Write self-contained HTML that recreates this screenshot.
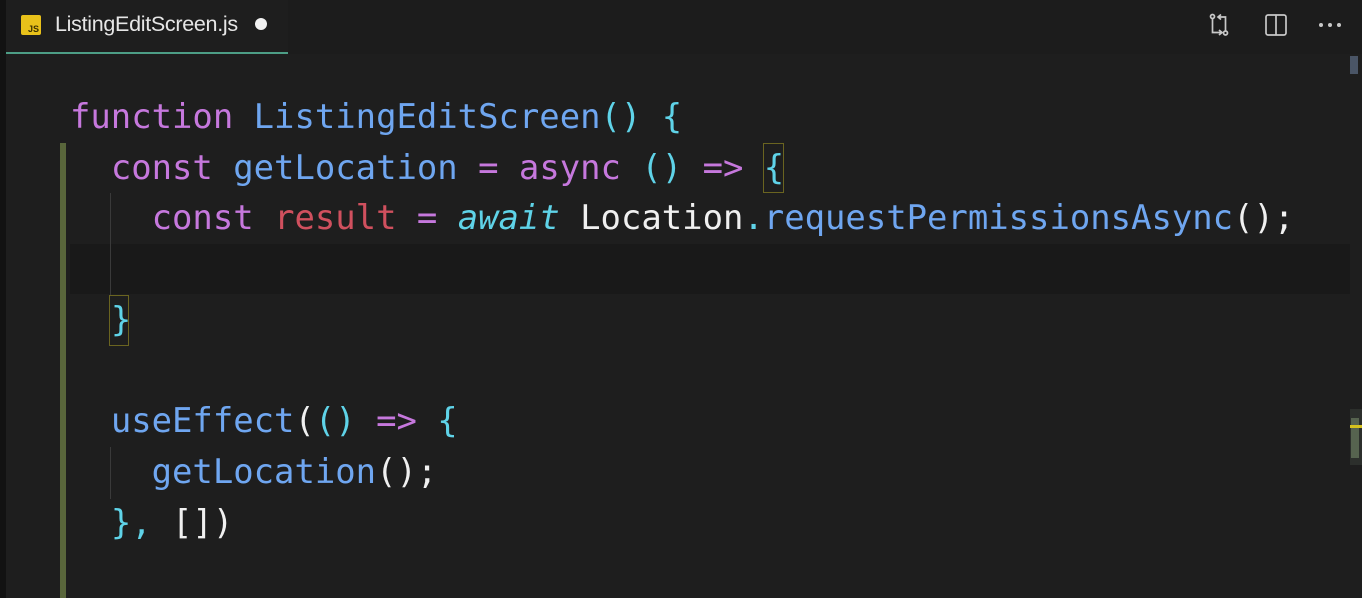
<!DOCTYPE html>
<html><head><meta charset="utf-8"><style>
html,body{margin:0;padding:0;}
body{width:1362px;height:598px;background:#1e1e1e;position:relative;overflow:hidden;font-family:"DejaVu Sans Mono","Liberation Mono",monospace;}
.side{position:absolute;left:0;top:0;width:6px;height:598px;background:#121212;}
.tabbar{position:absolute;left:6px;top:0;right:0;height:54px;background:#1c1c1c;}
.tab{position:absolute;left:6px;top:0;width:282px;height:52px;border-bottom:2px solid #4d9e86;background:#1e1e1e;}
.js{position:absolute;left:21px;top:15px;width:20px;height:20px;background:#e8c11a;border-radius:2px;font:bold 9px "Liberation Sans",sans-serif;color:#3a3000;}
.js span{position:absolute;right:2px;bottom:1px;}
.tname{position:absolute;left:55px;top:12px;font:21.5px "Liberation Sans",sans-serif;color:#e6e6e6;letter-spacing:-0.3px;}
.dot{position:absolute;left:255px;top:18px;width:12px;height:12px;border-radius:50%;background:#f2f2f2;}
.code{position:absolute;left:70px;top:92px;font-size:33.9px;line-height:50.7px;white-space:pre;color:#e8e8e8;}
.k{color:#c678dd}.f{color:#6fa6f0}.c{color:#5fd3e8}.r{color:#d0505e}.w{color:#f0f0f0}
.cur{position:absolute;left:70px;top:244px;width:1280px;height:50px;background:#191919;}
.gbar{position:absolute;left:60px;top:143px;width:6px;height:455px;background:#59663b;}
.guide{position:absolute;width:1px;background:#3a3a3a;}
.box{position:absolute;border:1px solid #6a6420;}
</style></head><body>
<div class="side"></div>
<div class="tabbar"></div>
<div class="tab"></div>
<div class="js"><span>JS</span></div>
<div class="tname">ListingEditScreen.js</div>
<div class="dot"></div>
<svg style="position:absolute;left:1207px;top:12px" width="26" height="26" viewBox="0 0 26 26" fill="none" stroke="#c8c8c8" stroke-width="1.7"><circle cx="5.5" cy="4.5" r="2"/><circle cx="18.5" cy="21" r="2"/><path d="M5.5 6.5v14h9M12 18l3 2.5-3 2.5"/><path d="M18.5 19V5H11M14 2.5 11 5l3 2.5"/></svg>
<svg style="position:absolute;left:1264px;top:13px" width="24" height="24" viewBox="0 0 24 24" fill="none" stroke="#c8c8c8" stroke-width="1.7"><rect x="2" y="2" width="20" height="20" rx="2"/><path d="M12 2v20"/></svg>
<div style="position:absolute;left:1319px;top:23px;width:4px;height:4px;background:#c8c8c8;border-radius:50%;box-shadow:9px 0 #c8c8c8,18px 0 #c8c8c8"></div>
<div style="position:absolute;left:1350px;top:56px;width:8px;height:18px;background:#4a5566"></div>
<div style="position:absolute;left:1350px;top:409px;width:12px;height:56px;background:#2c2f2c"></div>
<div style="position:absolute;left:1351px;top:418px;width:8px;height:40px;background:#56634f"></div>
<div style="position:absolute;left:1350px;top:425px;width:12px;height:3px;background:#d6c21e"></div>
<div class="cur"></div>
<div class="gbar"></div>
<div class="guide" style="left:110px;top:193px;height:102px"></div>
<div class="guide" style="left:110px;top:447px;height:52px"></div>
<div class="box" style="left:763px;top:143px;width:19px;height:48px"></div>
<div class="box" style="left:109px;top:295px;width:18px;height:49px"></div>
<div class="code"><span class="k">function</span> <span class="f">ListingEditScreen</span><span class="c">()</span> <span class="c">{</span>
  <span class="k">const</span> <span class="f">getLocation</span> <span class="k">=</span> <span class="k">async</span> <span class="c">()</span> <span class="k">=&gt;</span> <span class="c">{</span>
    <span class="k">const</span> <span class="r">result</span> <span class="k">=</span> <span class="c"><i>await</i></span> <span class="w">Location</span><span class="c">.</span><span class="f">requestPermissionsAsync</span><span class="w">();</span>

  <span class="c">}</span>

  <span class="f">useEffect</span><span class="w">(</span><span class="c">()</span> <span class="k">=&gt;</span> <span class="c">{</span>
    <span class="f">getLocation</span><span class="w">();</span>
  <span class="c">},</span> <span class="w">[])</span></div>
</body></html>
